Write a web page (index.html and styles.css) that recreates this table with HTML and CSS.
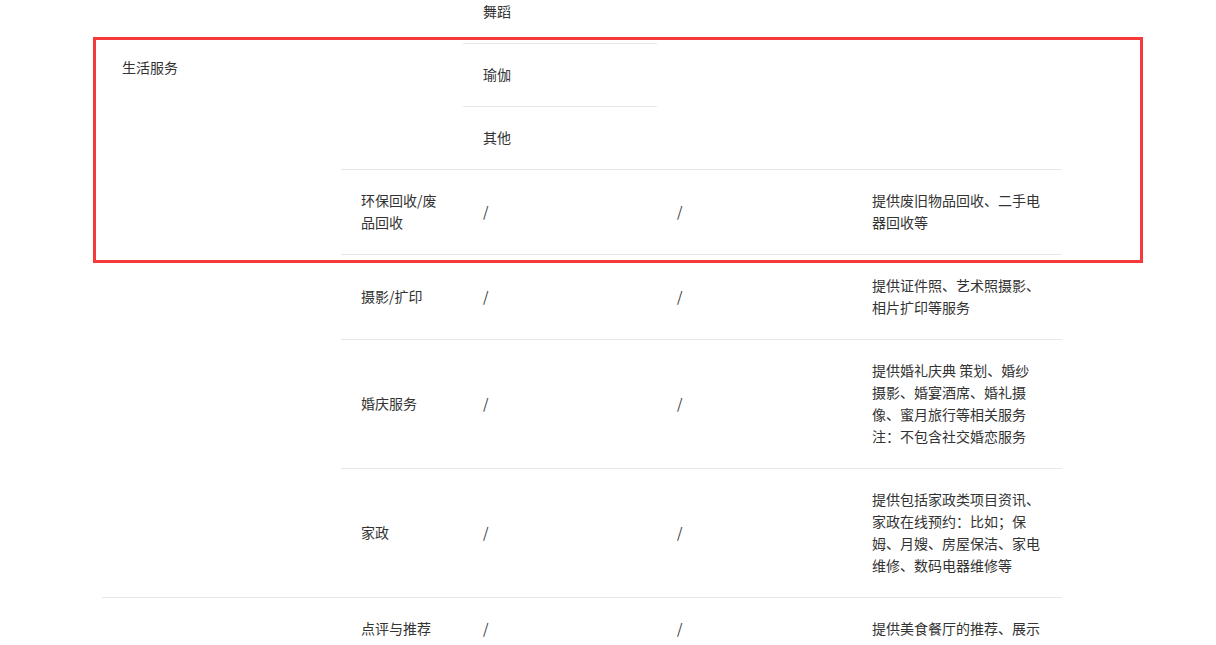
FILE: index.html
```html
<!DOCTYPE html>
<html lang="zh-CN">
<head>
<meta charset="utf-8">
<title>服务类目</title>
<link rel="stylesheet" href="styles.css">
</head>
<body>
<div class="page">
  <div class="grid">
    <div class="cell cat r1"></div>
    <div class="cell mid c2 r12"></div>
    <div class="cell sub c3 r12">
      <div class="subitem">舞蹈</div>
      <div class="subitem">瑜伽</div>
      <div class="subitem last">其他</div>
    </div>
    <div class="cell mid c4 r12"></div>
    <div class="cell mid c5 r12"></div>

    <div class="cell cat r26">生活服务</div>

    <div class="cell mid c2">环保回收/废品回收</div>
    <div class="cell mid c3">/</div>
    <div class="cell mid c4">/</div>
    <div class="cell mid c5">提供废旧物品回收、二手电器回收等</div>

    <div class="cell mid c2">摄影/扩印</div>
    <div class="cell mid c3">/</div>
    <div class="cell mid c4">/</div>
    <div class="cell mid c5">提供证件照、艺术照摄影、相片扩印等服务</div>

    <div class="cell mid c2">婚庆服务</div>
    <div class="cell mid c3">/</div>
    <div class="cell mid c4">/</div>
    <div class="cell mid c5">提供婚礼庆典 策划、婚纱摄影、婚宴酒席、婚礼摄像、蜜月旅行等相关服务<br>注：不包含社交婚恋服务</div>

    <div class="cell mid c2">家政</div>
    <div class="cell mid c3">/</div>
    <div class="cell mid c4">/</div>
    <div class="cell mid c5">提供包括家政类项目资讯、家政在线预约：比如；保姆、月嫂、房屋保洁、家电维修、数码电器维修等</div>

    <div class="cell cat r7"></div>
    <div class="cell mid c2">点评与推荐</div>
    <div class="cell mid c3">/</div>
    <div class="cell mid c4">/</div>
    <div class="cell mid c5">提供美食餐厅的推荐、展示</div>
  </div>
  <div class="highlight"></div>
</div>
</body>
</html>
```
FILE: styles.css
```css
html, body {
  margin: 0;
  padding: 0;
  background: #ffffff;
}
body {
  font-family: "Noto Sans CJK SC", "Microsoft YaHei", sans-serif;
  font-size: 14px;
  line-height: 22px;
  color: #333333;
  overflow: hidden;
}
.page {
  position: relative;
  height: 645px;
  overflow: hidden;
}
.grid {
  display: grid;
  grid-template-columns: 239px 122px 194px 195px 210px;
  grid-template-rows: 56px 133px auto auto auto auto auto;
  margin: -19px 0 0 102px;
  width: 960px;
}
.cell {
  border-bottom: 1px solid #e8e8e8;
  padding: 19px 20px 21px;
  box-sizing: border-box;
}
.cat {
  grid-column: 1;
}
.r1 { grid-row: 1; border-bottom-color: transparent; }
.r26 { grid-row: 2 / 7; }
.r7 { grid-row: 7; border-bottom: none; }
.r12 { grid-row: 1 / 3; }
.c2 { grid-column: 2; }
.c3 { grid-column: 3; }
.c4 { grid-column: 4; }
.c5 { grid-column: 5; }
.mid {
  display: flex;
  align-items: center;
}
.sub {
  padding: 0;
  display: flex;
  flex-direction: column;
}
.subitem {
  padding: 19px 20px 21px;
  border-bottom: 1px solid #e8e8e8;
}
.subitem.last {
  border-bottom: none;
}
.highlight {
  position: absolute;
  left: 93px;
  top: 37px;
  width: 1050px;
  height: 226px;
  border: 3px solid #f43a3a;
  box-sizing: border-box;
}
```
